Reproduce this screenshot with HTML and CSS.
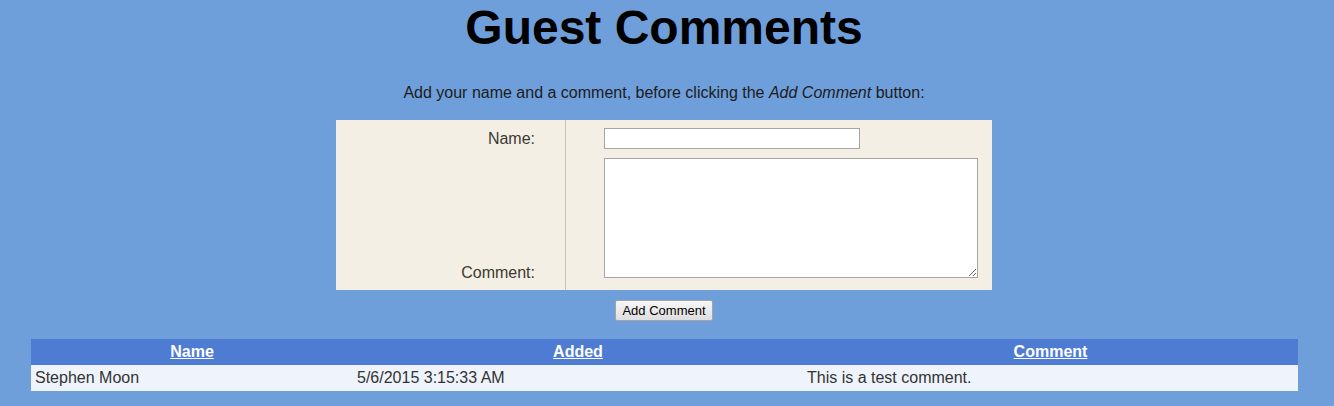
FILE: index.html
```html
<!DOCTYPE html>
<html lang="en">
<head>
<meta charset="utf-8">
<title>Guest Comments</title>
<link rel="stylesheet" href="styles.css">
</head>
<body>
<div class="page">
  <h1 class="title">Guest Comments</h1>
  <p class="intro">Add your name and a comment, before clicking the <em>Add Comment</em> button:</p>
  <form class="entry">
    <div class="labels">
      <label for="name">Name:</label>
      <label for="comment">Comment:</label>
    </div>
    <div class="fields">
      <input id="name" class="name-input" type="text">
      <textarea id="comment" class="comment-input"></textarea>
    </div>
  </form>
  <div class="actions">
    <button class="add-btn" type="button">Add Comment</button>
  </div>
  <table class="comments">
    <colgroup>
      <col class="c-name">
      <col class="c-added">
      <col class="c-comment">
    </colgroup>
    <thead>
      <tr>
        <th><a href="#">Name</a></th>
        <th><a href="#">Added</a></th>
        <th><a href="#">Comment</a></th>
      </tr>
    </thead>
    <tbody>
      <tr>
        <td>Stephen Moon</td>
        <td>5/6/2015 3:15:33 AM</td>
        <td>This is a test comment.</td>
      </tr>
    </tbody>
  </table>
</div>
</body>
</html>
```

FILE: styles.css
```css
html, body {
  margin: 0;
  padding: 0;
  background: #6f9fdb;
}
body {
  font-family: "Liberation Sans", Arial, sans-serif;
  font-size: 16px;
  color: #222;
}
.page {
  width: 1328px;
}
.title {
  margin: 0;
  font-size: 48px;
  font-weight: bold;
  text-align: center;
  color: #000;
  line-height: 55px;
}
.intro {
  margin: 29px 0 18px;
  text-align: center;
  line-height: 18px;
  color: #1c1c1c;
}
.entry {
  display: flex;
  width: 656px;
  height: 170px;
  margin: 0 auto;
  background: #f4efe5;
}
.labels {
  width: 230px;
  box-sizing: border-box;
  border-right: 1px solid #cbc2b8;
  padding: 10px 30px 8px 0;
  display: flex;
  flex-direction: column;
  justify-content: space-between;
  align-items: flex-end;
  color: #3b3a30;
  line-height: 18px;
}
.fields {
  flex: 1;
  padding: 8px 0 0 38px;
  display: flex;
  flex-direction: column;
  align-items: flex-start;
}
.name-input {
  width: 256px;
  height: 21px;
  box-sizing: border-box;
  margin: 0;
  border: 1px solid #a9a6a2;
  background: #fff;
  padding: 1px 2px;
}
.comment-input {
  width: 374px;
  height: 120px;
  box-sizing: border-box;
  margin: 9px 0 0;
  border: 1px solid #a9a6a2;
  background: #fff;
  padding: 2px;
}
.actions {
  display: flex;
  justify-content: center;
  margin-top: 10px;
}
.add-btn {
  width: 98px;
  height: 21px;
  padding: 0;
  font-family: "Liberation Sans", Arial, sans-serif;
  font-size: 13px;
  color: #000;
  border: 1px solid #a3a3a3;
  border-radius: 2px;
  background: linear-gradient(#f7f7f7, #dedede);
}
.comments {
  margin: 18px 0 0 31px;
  width: 1267px;
  border-collapse: collapse;
  table-layout: fixed;
}
.c-name { width: 322px; }
.c-added { width: 450px; }
.c-comment { width: 495px; }
.comments th {
  background: #4f7cd3;
  padding: 4px 3px;
  line-height: 18px;
  height: 18px;
  text-align: center;
  font-weight: bold;
}
.comments th a {
  color: #fff;
  text-decoration: underline;
}
.comments td {
  background: #eef3fc;
  padding: 4px 3px 4px 4px;
  line-height: 18px;
  color: #333;
  text-align: left;
}
```
